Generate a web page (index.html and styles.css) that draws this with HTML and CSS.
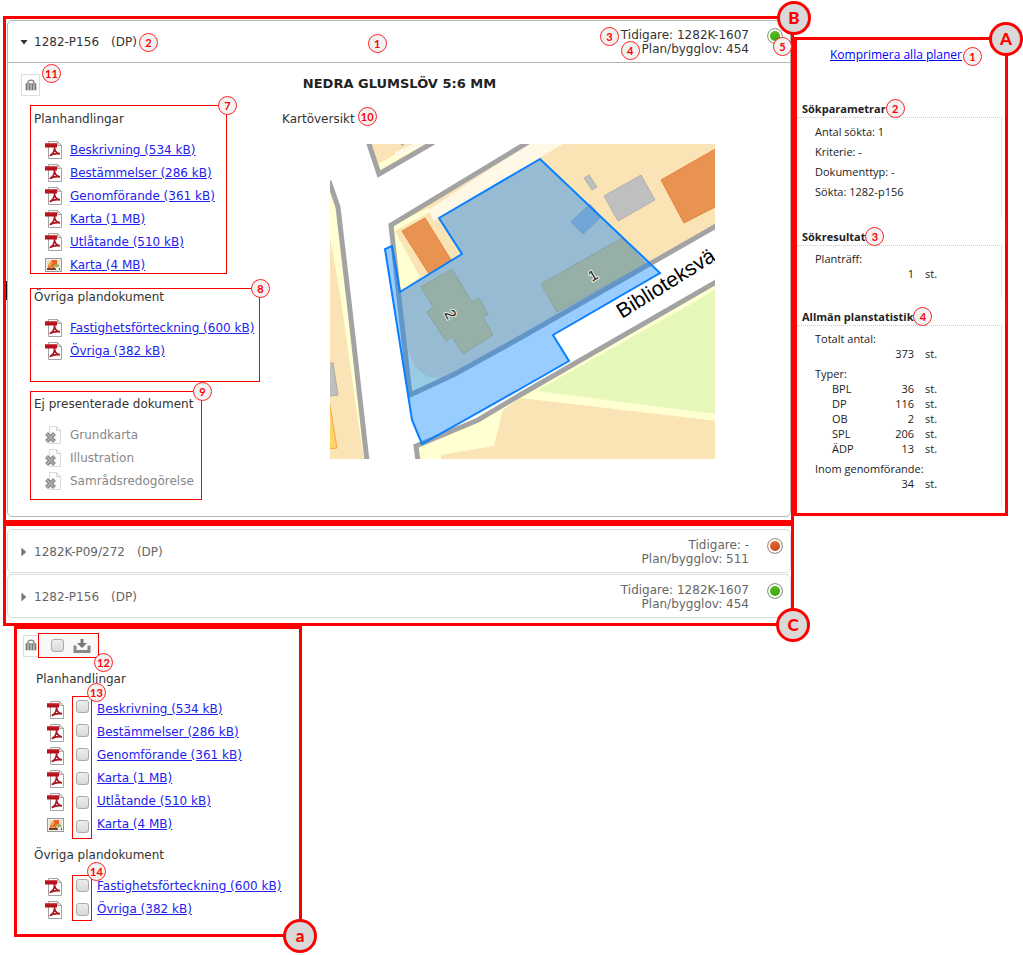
FILE: index.html
```html
<!DOCTYPE html>
<html lang="sv">
<head>
<meta charset="utf-8">
<title>Planer</title>
<link rel="stylesheet" href="styles.css">
</head>
<body>
<svg class="defs" aria-hidden="true">
  <symbol id="pdf" viewBox="0 0 17 18">
    <path d="M3.5 .5h9l4 4v13h-13z" fill="#fff" stroke="#a3a3a3"/>
    <path d="M12.5 .5v4h4z" fill="#e4e4e4" stroke="#999" stroke-width=".8"/>
    <path d="M0 2h12v4.500H0z" fill="#b5121b"/>
    <path d="M0 2h12v1.200H0z" fill="#cf4a50"/>
    <path d="M9.500 6c-.2 3 .8 6 5.500 6.800M9.500 7.500c-.4 3.500-2.200 5.800-4.800 7.200M5 14.500c2.400-1.600 5.500-2.200 10-1.700" fill="none" stroke="#a81822" stroke-width="1.700"/>
  </symbol>
  <symbol id="picture" viewBox="0 0 17 18">
    <rect x=".5" y="2.500" width="16" height="13" fill="#f1f1ee" stroke="#999"/>
    <rect x="2" y="4" width="13" height="10" fill="#e8dfc4"/>
    <path d="M3 10 7 4h5v4l-4 3-5 1z" fill="#e9622c"/>
    <path d="M3 9 6 5l2 2-3 4z" fill="#f2a13a"/>
    <path d="M9 8h3l2 1v2l-3 1z" fill="#9bb04a"/>
    <path d="M2 12h5l2-1 2 2 4-1v2H2z" fill="#7a3b22"/>
    <path d="m11 12 1.500-1.500L14 12v2h-3z" fill="#eee"/>
  </symbol>
  <symbol id="missing" viewBox="0 0 17 18">
    <path d="M4.500 .5h7l4 4v13h-11z" fill="#fdfdfd" stroke="#d9d9d9"/>
    <path d="M11.500 .5v4h4" fill="none" stroke="#d0d0d0"/>
    <path d="m1.500 7.500 8 8m0-8-8 8" stroke="#848484" stroke-width="4"/>
    <path d="m1.800 7.800 7.400 7.400m0-7.400-7.400 7.400" stroke="#aaa" stroke-width="2"/>
  </symbol>
  <symbol id="case" viewBox="0 0 10 11">
    <path d="M2.500 4V2.800Q2.500 1 5 1t2.500 1.800V4" fill="none" stroke="#888" stroke-width="1.200"/>
    <path d="M.5 4.500Q.5 3.500 1.500 3.500h7q1 0 1 1v5h-9z" fill="#777"/>
    <path d="M2.500 4v5.500m2.500-5.500v5.500M7.500 4v5.500" stroke="#ddd" stroke-width=".9"/>
  </symbol>
</svg>

<div class="page">
  <main class="main">
    <section class="frame frame-b">
      <span class="mark mark-b">B</span>
      <article class="plan open">
        <header class="plan-head">
          <button class="toggle" type="button" aria-expanded="true"><i class="arrow down"></i><span class="tagged">1282-P156<span class="kind">(DP)</span><span class="num after-title">2</span></span></button>
          <span class="num n-head">1</span>
          <p class="refs"><span class="tagged"><span class="num n-prev">3</span>Tidigare: 1282K-1607</span><br><span class="tagged"><span class="num n-permit">4</span>Plan/bygglov: 454</span></p>
          <span class="status green"><span class="num n-status">5</span></span>
        </header>
        <div class="plan-body">
          <div class="title-row">
            <div class="tool"><button class="case" type="button" aria-label="Portfölj"><svg><use href="#case"/></svg></button><span class="num n-case">11</span></div>
            <h2>NEDRA GLUMSLÖV 5:6 MM</h2>
          </div>
          <div class="columns">
            <div class="docs">
              <section class="box box-plan">
                <span class="num corner">7</span>
                <h3>Planhandlingar</h3>
                <ul>
                  <li><svg><use href="#pdf"/></svg><a href="#">Beskrivning (534 kB)</a></li>
                  <li><svg><use href="#pdf"/></svg><a href="#">Bestämmelser (286 kB)</a></li>
                  <li><svg><use href="#pdf"/></svg><a href="#">Genomförande (361 kB)</a></li>
                  <li><svg><use href="#pdf"/></svg><a href="#">Karta (1 MB)</a></li>
                  <li><svg><use href="#pdf"/></svg><a href="#">Utlåtande (510 kB)</a></li>
                  <li><svg><use href="#picture"/></svg><a href="#">Karta (4 MB)</a></li>
                </ul>
              </section>
              <section class="box box-other">
                <span class="num corner">8</span>
                <h3>Övriga plandokument</h3>
                <ul>
                  <li><svg><use href="#pdf"/></svg><a href="#">Fastighetsförteckning (600 kB)</a></li>
                  <li><svg><use href="#pdf"/></svg><a href="#">Övriga (382 kB)</a></li>
                </ul>
              </section>
              <section class="box box-missing">
                <span class="num corner">9</span>
                <h3>Ej presenterade dokument</h3>
                <ul>
                  <li><svg><use href="#missing"/></svg>Grundkarta</li>
                  <li><svg><use href="#missing"/></svg>Illustration</li>
                  <li><svg><use href="#missing"/></svg>Samrådsredogörelse</li>
                </ul>
              </section>
            </div>
            <section class="overview">
              <h3><span class="tagged">Kartöversikt<span class="num after-map">10</span></span></h3>
              <svg class="map" viewBox="330 144 385 315" role="img" aria-label="Karta">
                <rect x="330" y="144" width="385" height="315" fill="#fff"/>
                <path d="M369 142 379 174 434 142z" fill="#fae3b5"/>
                <path d="m379 172-1-8 18-10 26-12h12z" fill="#ffffd2"/>
                <path d="m395 157 0-5 22-10h15z" fill="#fff8e6"/>
                <path d="M400 144h4l-1 2z" fill="#aaa"/>
                <path d="M368 141 379 174 434 142" fill="none" stroke="#a3a3a3" stroke-width="5"/>
                <path d="M330 184 338 207 350 310 366 460H330z" fill="#ffffd2"/>
                <path d="M330 237 341 300 355 400 364 460H330z" fill="#fae3b5"/>
                <path d="M329 363h4l5 32-9 1z" fill="#bfbfbf" stroke="#b0a99c"/>
                <path d="m329 400 8 48-8 1z" fill="#ffd56a" stroke="#f5a742"/>
                <path d="M329 181 338 207 350 310 367 461" fill="none" stroke="#a3a3a3" stroke-width="5"/>
                <path d="M528 142H717V226L520 338 455 374 410 395 391 225z" fill="#fae3b5"/>
                <path d="M528 144H563L434 221 428 210z" fill="#fff8e6"/>
                <path d="M392 226 428 208 430 212 395 231 420 277 400 292z" fill="#ffffd2"/>
                <path d="M408 350 415 367 428 377 445 378 411 394z" fill="#ffffd2"/>
                <path d="M402 231 425 218 451 260 429 274z" fill="#e89352" stroke="#e2833f"/>
                <path d="M661 180 717 148V206L684 223z" fill="#e89352" stroke="#e2833f"/>
                <g fill="#bfbfbf" stroke="#b3b0ac">
                  <path d="M604 196 641 175 655 200 618 221z"/>
                  <path d="m584 178 5-3 8 12-5 3z"/>
                  <path d="M571 222 590 204 601 217 583 234z"/>
                </g>
                <g fill="#fad06e" stroke="#e9b765">
                  <path d="M541 284 622 238 645 264 557 312z"/>
                  <path d="M421 287 452 269 472 302 479 298 488 314 483 317 493 335 463 354 452 337 446 341 427 312 433 307z"/>
                </g>
                <path d="M530 141 391 225 395 262 410 395 455 374 520 338 718 225" fill="none" stroke="#a3a3a3" stroke-width="5"/>
                <path d="M417 461 416 446 478 420 520 395 718 281V461z" fill="#ffffd2"/>
                <path d="M503 410 520 398 717 421V461H441V455L494 446z" fill="#fae3b5"/>
                <path d="M536 391 700 299 717 288V414z" fill="#e6f8b9"/>
                <path d="M418 461 416 446 478 420 520 395 718 281" fill="none" stroke="#a3a3a3" stroke-width="5"/>
                <path d="M540 159 439 218 462 254 400 292 392 246 385 249 412 420 422 444 520 389 569 361 553 335 660 273z" fill="#007fff" fill-opacity=".4" stroke="#0a80ff" stroke-width="2"/>
                <text class="street" transform="translate(622 319) rotate(-32)">Biblioteksvä</text>
                <text class="house" transform="translate(592 282) rotate(-31)">1</text>
                <text class="house" transform="translate(444 313) rotate(62)">2</text>
              </svg>
            </section>
          </div>
        </div>
      </article>
    </section>

    <section class="frame frame-c">
      <span class="mark mark-c">C</span>
      <article class="plan closed">
        <header class="plan-head">
          <button class="toggle" type="button" aria-expanded="false"><i class="arrow right"></i><span>1282K-P09/272<span class="kind">(DP)</span></span></button>
          <p class="refs">Tidigare: -<br>Plan/bygglov: 511</p>
          <span class="status red"></span>
        </header>
      </article>
      <article class="plan closed">
        <header class="plan-head">
          <button class="toggle" type="button" aria-expanded="false"><i class="arrow right"></i><span>1282-P156<span class="kind">(DP)</span></span></button>
          <p class="refs">Tidigare: 1282K-1607<br>Plan/bygglov: 454</p>
          <span class="status green"></span>
        </header>
      </article>
    </section>

    <section class="frame frame-small">
      <span class="mark mark-small">a</span>
      <div class="toolbar">
        <button class="case" type="button" aria-label="Portfölj"><svg><use href="#case"/></svg></button>
        <div class="pack">
          <input type="checkbox" aria-label="Välj alla">
          <button class="download" type="button" aria-label="Ladda ner"><svg viewBox="0 0 18 14"><path d="M2 6.500v6h14v-6" fill="none" stroke="#888" stroke-width="3"/><path d="M7.500 0h3v4H14L9 9 4 4h3.500z" fill="#777"/></svg></button>
          <span class="num n-pack">12</span>
        </div>
      </div>
      <h3 class="first">Planhandlingar</h3>
      <div class="picks picks-plan">
        <div class="icons"><svg><use href="#pdf"/></svg><svg><use href="#pdf"/></svg><svg><use href="#pdf"/></svg><svg><use href="#pdf"/></svg><svg><use href="#pdf"/></svg><svg><use href="#picture"/></svg></div>
        <div class="checks">
          <span class="num n-checks">13</span>
          <input type="checkbox" aria-labelledby="d1"><input type="checkbox" aria-labelledby="d2"><input type="checkbox" aria-labelledby="d3"><input type="checkbox" aria-labelledby="d4"><input type="checkbox" aria-labelledby="d5"><input type="checkbox" aria-labelledby="d6">
        </div>
        <div class="links">
          <a href="#" id="d1">Beskrivning (534 kB)</a>
          <a href="#" id="d2">Bestämmelser (286 kB)</a>
          <a href="#" id="d3">Genomförande (361 kB)</a>
          <a href="#" id="d4">Karta (1 MB)</a>
          <a href="#" id="d5">Utlåtande (510 kB)</a>
          <a href="#" id="d6">Karta (4 MB)</a>
        </div>
      </div>
      <h3>Övriga plandokument</h3>
      <div class="picks picks-other">
        <div class="icons"><svg><use href="#pdf"/></svg><svg><use href="#pdf"/></svg></div>
        <div class="checks">
          <span class="num n-checks">14</span>
          <input type="checkbox" aria-labelledby="d7"><input type="checkbox" aria-labelledby="d8">
        </div>
        <div class="links">
          <a href="#" id="d7">Fastighetsförteckning (600 kB)</a>
          <a href="#" id="d8">Övriga (382 kB)</a>
        </div>
      </div>
    </section>
  </main>

  <aside class="frame side">
    <span class="mark mark-a">A</span>
    <p class="compress"><a href="#">Komprimera alla planer</a><span class="num n-link">1</span></p>
    <section>
      <h2><span class="tagged">Sökparametrar<span class="num after-head">2</span></span></h2>
      <div class="side-body">
        <ul>
          <li>Antal sökta: 1</li>
          <li>Kriterie: -</li>
          <li>Dokumenttyp: -</li>
          <li>Sökta: 1282-p156</li>
        </ul>
      </div>
    </section>
    <section>
      <h2><span class="tagged">Sökresultat<span class="num after-head">3</span></span></h2>
      <div class="side-body stats">
        <table>
          <tr><th colspan="3">Planträff:</th></tr>
          <tr><td></td><td>1</td><td>st.</td></tr>
        </table>
      </div>
    </section>
    <section>
      <h2><span class="tagged">Allmän planstatistik<span class="num after-head">4</span></span></h2>
      <div class="side-body stats">
        <table>
          <tr><th colspan="3">Totalt antal:</th></tr>
          <tr><td></td><td>373</td><td>st.</td></tr>
          <tr class="group"><th colspan="3">Typer:</th></tr>
          <tr><td>BPL</td><td>36</td><td>st.</td></tr>
          <tr><td>DP</td><td>116</td><td>st.</td></tr>
          <tr><td>OB</td><td>2</td><td>st.</td></tr>
          <tr><td>SPL</td><td>206</td><td>st.</td></tr>
          <tr><td>ÄDP</td><td>13</td><td>st.</td></tr>
          <tr class="group"><th colspan="3">Inom genomförande:</th></tr>
          <tr><td></td><td>34</td><td>st.</td></tr>
        </table>
      </div>
    </section>
  </aside>
</div>
</body>
</html>
```

FILE: styles.css
```css
* { box-sizing: border-box; }
body { margin: 0; background: #fff; color: #333; font: 12px/16px "DejaVu Sans", Verdana, sans-serif; }
h2, h3, p, ul { margin: 0; padding: 0; }
h3 { font-size: 12px; font-weight: 400; line-height: 16px; }
ul { list-style: none; }
button { font: inherit; color: inherit; background: none; border: 0; padding: 0; cursor: pointer; }
a { color: #22e; }
svg { display: block; flex: none; }
.defs { position: absolute; width: 0; height: 0; }

.page { display: grid; grid-template-columns: minmax(0, 1fr) 214px; align-items: start; padding: 16px 15px 16px 3px; }
.frame { position: relative; border: 3px solid #f00; }

/* Callouts */
.tagged { position: relative; }
.num { position: absolute; z-index: 2; width: 19px; height: 19px; border: 1px solid #f22; border-radius: 50%; background: #f2f2f2; color: #f00; font: 700 11px/17px Lato, sans-serif; text-align: center; }
.mark { position: absolute; z-index: 3; width: 34px; height: 34px; border: 3px solid #f00; border-radius: 50%; background: #d9d9d9; color: #f00; font: 900 17px/27px Lato, sans-serif; text-align: center; }
.mark-b { top: -18px; right: -20px; }
.mark-c { bottom: -19px; right: -19px; }
.mark-a { top: -18px; right: -18px; }
.mark-small { bottom: -19px; right: -18px; }
.after-title { left: 100%; top: -1px; margin-left: 2px; }
.n-head { left: 46%; top: 13px; }
.n-prev { right: 100%; top: -1px; margin-right: 2px; }
.n-permit { right: 100%; top: -1px; margin-right: 2px; }
.n-status { left: 5px; top: 8px; }
.n-case { left: 21px; top: -10px; }
.corner { right: -11px; top: -10px; }
.after-map { left: 100%; top: -5px; margin-left: 3px; }
.n-pack { right: -15px; bottom: -15px; }
.n-checks { left: 14px; top: -14px; }
.n-link { right: 20px; top: 0; }
.after-head { left: 100%; top: -2px; }

/* Plans */
.frame-b { padding: 1px 0 3px 1px; }
.frame-b::before { content: ""; position: absolute; left: 0; top: 262px; width: 1px; height: 19px; background: #000; }
.plan { border: 1px solid #b4b4b4; border-radius: 5px; }
.plan-head { position: relative; display: flex; align-items: center; padding: 7px 7px 6px 12px; }
.open .plan-head { border-bottom: 1px solid #b4b4b4; }
.toggle { display: flex; align-items: center; gap: 7px; margin-right: auto; }
.kind { margin-left: 12px; }
.arrow { width: 7px; height: 9px; background: #333; }
.arrow.down { height: 5px; width: 8px; margin-right: -1px; clip-path: polygon(0 0, 100% 0, 50% 100%); }
.arrow.right { background: #777; clip-path: polygon(20% 0, 90% 50%, 20% 100%); }
.refs { line-height: 14px; text-align: right; margin-right: 18px; }
.status { position: relative; align-self: flex-start; width: 16px; height: 16px; border: 1px solid #999; border-radius: 50%; box-shadow: inset 0 0 0 2px #fff; }
.green { background: linear-gradient(160deg, #66c52a, #2f9c08); }
.red { background: linear-gradient(160deg, #ee7a45, #b93a0a); }

.plan-body { padding: 11px 12px 16px 13px; }
.title-row { display: grid; grid-template-columns: 1fr auto 1fr; column-gap: 8px; }
.title-row h2 { font-size: 13px; line-height: 20px; color: #222; }
.tool { position: relative; }
.case { display: grid; place-items: center; width: 19px; height: 22px; border: 1px solid #ddd; }
.case svg { width: 12px; height: 13px; }
.columns { display: flex; align-items: flex-start; padding: 9px 0 0 9px; }
.docs { flex: none; width: 252px; }
.box { position: relative; border: 1px solid #f00; padding-left: 3px; }
.box ul { display: grid; gap: 7px; margin-top: 15px; padding-left: 11px; }
.box li { display: flex; align-items: center; gap: 8px; height: 16px; white-space: nowrap; }
.box svg { width: 17px; height: 18px; }
.box-plan { width: 197px; padding-top: 5px; margin-bottom: 14px; }
.box-other { width: 230px; padding-bottom: 22px; margin-bottom: 9px; }
.box-missing { width: 172px; padding-top: 4px; padding-bottom: 10px; }
.box-missing li { color: #888; }
.overview { flex: 1; min-width: 0; padding-top: 6px; }
.map { width: 385px; max-width: calc(100% - 48px); margin: 17px 0 0 48px; }
.street { font: 21px "Liberation Sans", Arial, sans-serif; fill: #000; stroke: #fff; stroke-width: 2px; paint-order: stroke; }
.house { font: 15px "Liberation Sans", Arial, sans-serif; fill: #222; stroke: #eee; stroke-width: 2px; paint-order: stroke; }

.frame-c { display: grid; gap: 1px; padding: 3px 0 5px 1px; }
.closed { border-color: #ddd; color: #666; }
.closed .plan-head { padding-top: 8px; }

/* Selectable documents */
.frame-small { width: 288px; margin-left: 11px; padding: 4px 0 13px 6px; }
.toolbar { display: flex; align-items: center; margin-bottom: 13px; }
.toolbar .case { width: 15px; border-right: 0; }
.pack { position: relative; display: flex; align-items: center; gap: 9px; height: 25px; width: 61px; padding-left: 12px; border: 1px solid #f00; background: #f8f8f8; }
.download svg { width: 18px; height: 14px; }
input { appearance: none; flex: none; width: 13px; height: 13px; margin: 0; border: 1px solid #aaa; border-radius: 3px; background: linear-gradient(#eee, #d8d8d8); }
.frame-small h3 { padding-left: 11px; margin-top: 8px; }
.frame-small .first { padding-left: 13px; margin-top: 0; }
.picks { display: grid; grid-template-columns: 25px 20px auto; justify-content: start; align-items: start; padding-left: 24px; }
.picks-plan { margin-top: 9px; }
.picks-other { grid-template-columns: 27px 20px auto; margin-top: 12px; padding-left: 22px; }
.checks { position: relative; display: grid; gap: 11px; justify-items: center; padding: 3px 0 5px; border: 1px solid #f00; }
.picks-other .checks { padding-bottom: 4px; }
.icons, .links { display: grid; gap: 7px; grid-auto-rows: 16px; padding-top: 5px; }
.picks-other .icons, .picks-other .links { padding-top: 3px; }
.icons svg { width: 17px; height: 18px; }
.links { padding-left: 5px; white-space: nowrap; }

/* Summary */
.side { margin-top: 21px; padding: 7px 3px 5px 0; color: #222; font: 11px/16px "Open Sans", "Trebuchet MS", sans-serif; }
.compress { position: relative; padding: 0 40px 0 0; margin-bottom: 38px; text-align: right; font-size: 12px; }
.compress a { color: #00f; }
.side section + section { margin-top: 11px; }
.side h2 { font-size: 11px; line-height: 16px; font-weight: 700; padding-left: 5px; }
.side-body { border-top: 1px dotted #ccc; border-right: 1px dotted #ccc; padding: 4px 0 16px 18px; }
.side-body li { line-height: 20px; }
.stats { padding: 5px 0 17px 18px; }
table { border-spacing: 0; }
th, td { padding: 0; line-height: 15px; text-align: left; font-weight: 400; }
.group th { padding-top: 5px; }
td:first-child { width: 67px; padding-left: 17px; }
td:nth-child(2) { width: 32px; text-align: right; }
td:nth-child(3) { padding-left: 11px; }
```
